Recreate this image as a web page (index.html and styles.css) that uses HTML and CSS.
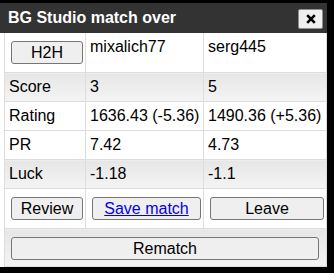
FILE: index.html
```html
<!DOCTYPE html>
<html>
<head>
<meta charset="utf-8">
<link rel="stylesheet" href="styles.css">
</head>
<body>
<div class="dialog">
  <div class="titlebar">
    <span class="title">BG Studio match over</span>
    <button class="close" type="button" aria-label="Close">
      <svg class="close-icon" width="10" height="10" viewBox="0 0 10 10">
        <path d="M1.2 1.2 L8.8 8.8 M8.8 1.2 L1.2 8.8" stroke="#000" stroke-width="2.6" stroke-linecap="butt" fill="none"/>
      </svg>
    </button>
  </div>
  <table class="results">
    <colgroup>
      <col class="c1"><col class="c2"><col class="c3">
    </colgroup>
    <tr class="head">
      <td><button class="btn">H2H</button></td>
      <td>mixalich77</td>
      <td>serg445</td>
    </tr>
    <tr class="shade">
      <td>Score</td><td>3</td><td>5</td>
    </tr>
    <tr>
      <td>Rating</td><td>1636.43 (-5.36)</td><td>1490.36 (+5.36)</td>
    </tr>
    <tr>
      <td>PR</td><td>7.42</td><td>4.73</td>
    </tr>
    <tr class="shade">
      <td>Luck</td><td>-1.18</td><td>-1.1</td>
    </tr>
    <tr class="actions">
      <td><button class="btn">Review</button></td>
      <td><button class="btn"><a href="#" class="link">Save match</a></button></td>
      <td><button class="btn">Leave</button></td>
    </tr>
    <tr class="shade actions last">
      <td colspan="3"><button class="btn wide">Rematch</button></td>
    </tr>
  </table>
</div>
</body>
</html>
```

FILE: styles.css
```css
html, body {
  margin: 0;
  padding: 0;
}
body {
  background: #000;
  width: 334px;
  height: 273px;
  overflow: hidden;
  font-family: "Liberation Sans", Arial, sans-serif;
  font-size: 16px;
  color: #000;
}
.dialog {
  margin-top: 3px;
  width: 327px;
  height: 264px;
  background: #fff;
}
.titlebar {
  height: 30px;
  background: #333;
  display: flex;
  align-items: center;
  justify-content: space-between;
  padding: 0 4px 0 8px;
  box-sizing: border-box;
}
.title {
  color: #fff;
  font-weight: bold;
  font-size: 16px;
}
.close {
  width: 25px;
  height: 20px;
  margin-top: 2px;
  padding: 0;
  background: #efefef;
  border: 1px solid #8f8f8f;
  border-radius: 2px;
  display: flex;
  align-items: center;
  justify-content: center;
}
.close-icon {
  display: block;
}
.results {
  margin-left: 4px;
  width: 322px;
  border-collapse: collapse;
  table-layout: fixed;
}
.c1 { width: 81px; }
.c2 { width: 118px; }
.c3 { width: 123px; }
.results td {
  border: 1px solid #ddd;
  padding: 5px 4px;
  line-height: 18px;
  vertical-align: top;
  white-space: nowrap;
  overflow: visible;
}
.results tr.head td {
  border-top: none;
}
.shade td {
  background: linear-gradient(#e6e6e6, #f4f4f4);
}
.btn {
  display: block;
  box-sizing: border-box;
  width: 100%;
  height: 23px;
  margin: 3px 0 3px 2px;
  padding: 0;
  font-family: "Liberation Sans", Arial, sans-serif;
  font-size: 16px;
  line-height: 20px;
  color: #000;
  background: #efefef;
  border: 1px solid #767676;
  border-radius: 3px;
}
.btn.wide {
  width: 308px;
}
.link {
  color: #0000ee;
  text-decoration: underline;
}
.last td {
  padding-bottom: 3px;
}
```
